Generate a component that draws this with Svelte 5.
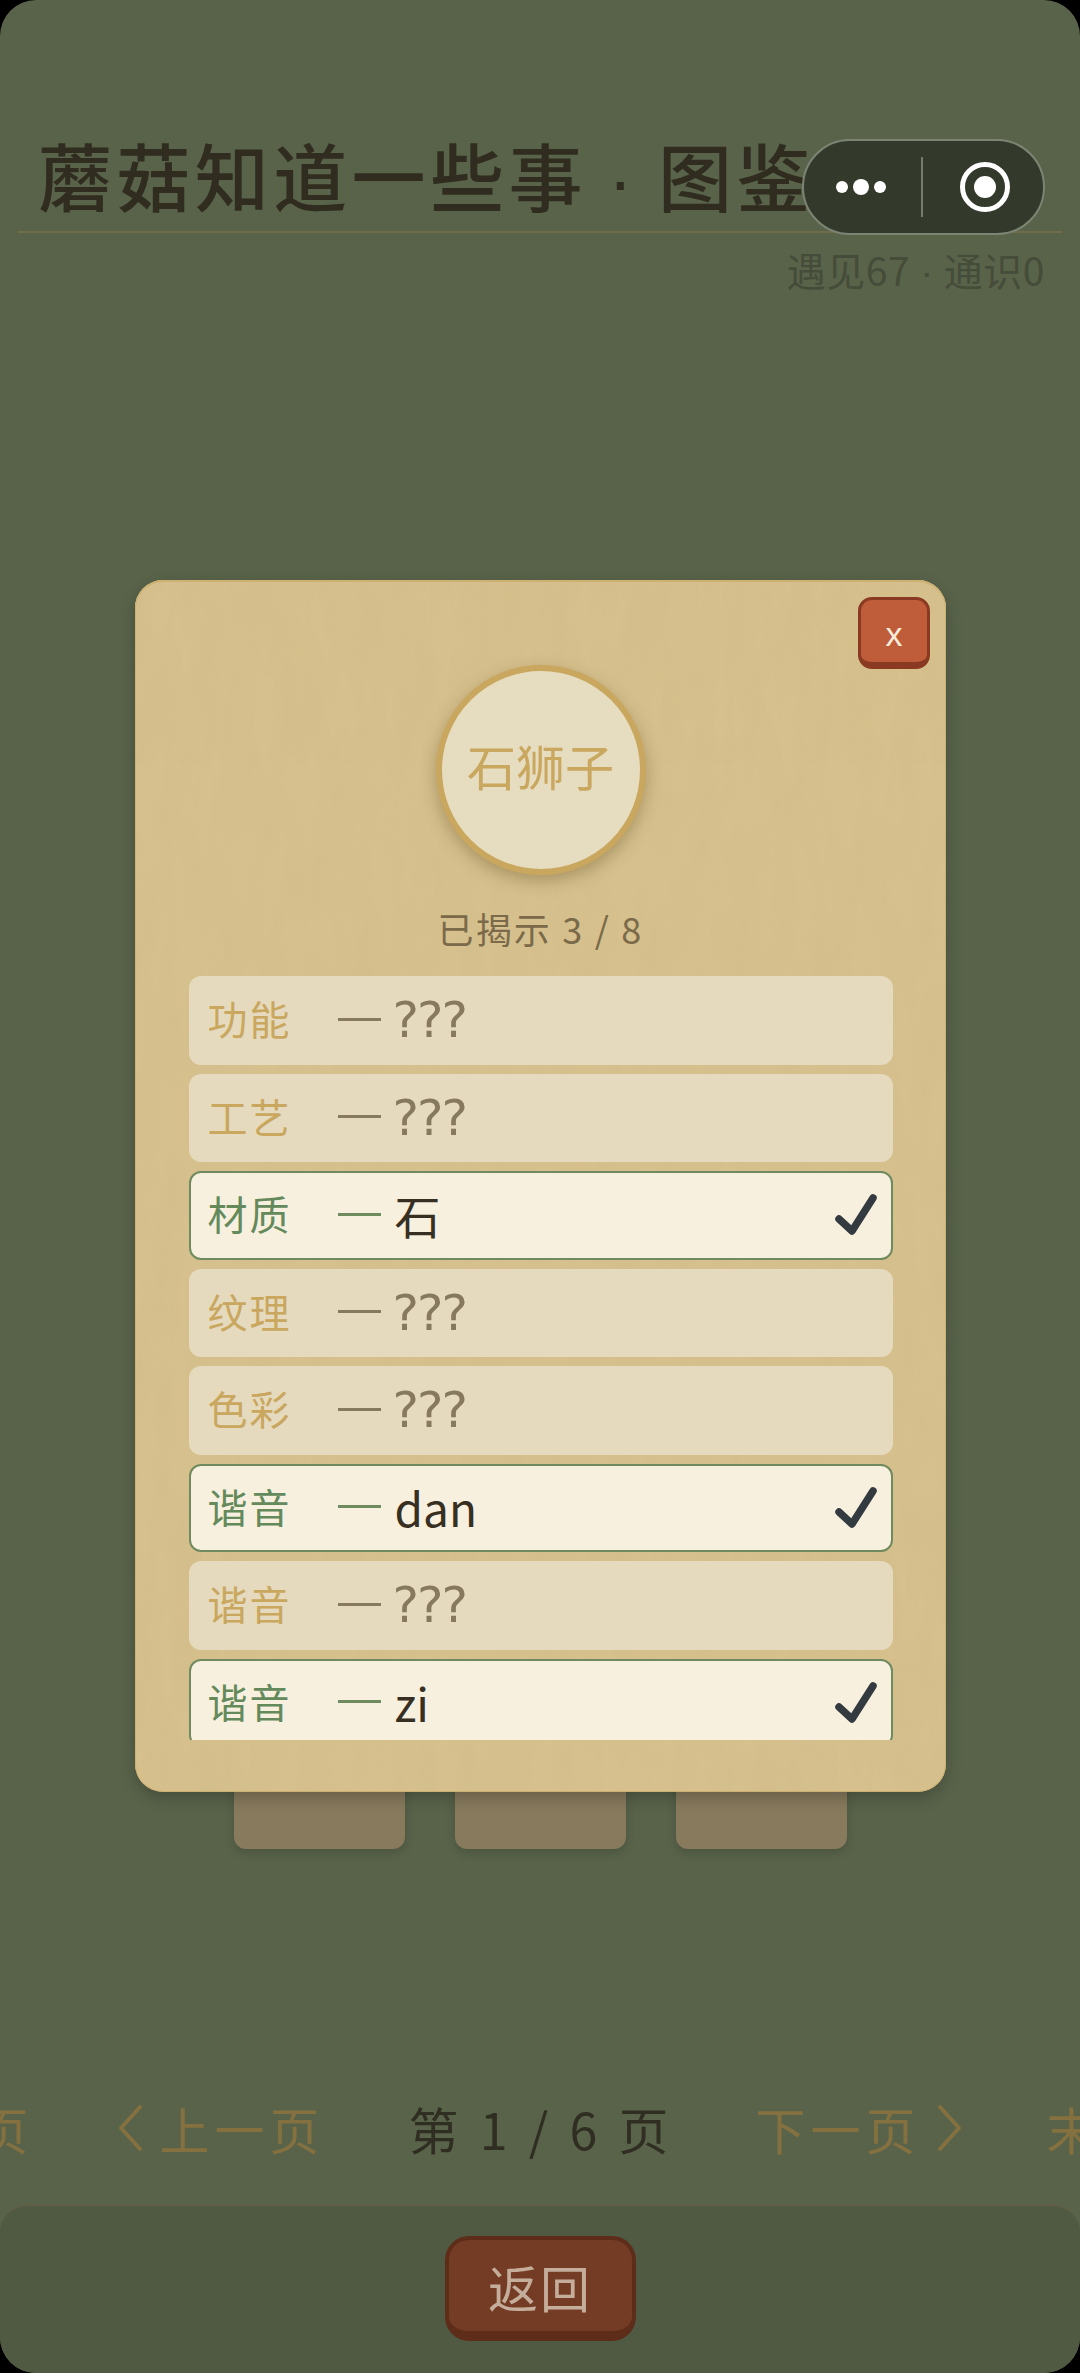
<script lang="ts">
  type Clue = { label: string; value: string; known: boolean };

  const clues: Clue[] = [
    { label: "功能", value: "???", known: false },
    { label: "工艺", value: "???", known: false },
    { label: "材质", value: "石", known: true },
    { label: "纹理", value: "???", known: false },
    { label: "色彩", value: "???", known: false },
    { label: "谐音", value: "dan", known: true },
    { label: "谐音", value: "???", known: false },
    { label: "谐音", value: "zi", known: true },
  ];
</script>

<div class="screen">
  <header class="head">
    <h1 class="title">蘑菇知道一些事<span class="mid">·</span>图鉴</h1>
    <p class="stats">遇见67<span class="mid">·</span>通识0</p>
  </header>

  <main class="shelf">
    <div class="card"></div>
    <div class="card"></div>
    <div class="card"></div>
  </main>

  <nav class="pager">
    <span class="link">首页</span>
    <span class="link arrow">
      <svg class="chev" viewBox="0 0 24 46" aria-hidden="true"><path d="M22 2 L3 23 L22 44" /></svg>
      上一页
    </span>
    <span class="current">第 1 / 6 页</span>
    <span class="link arrow">
      下一页
      <svg class="chev" viewBox="0 0 24 46" aria-hidden="true"><path d="M2 2 L21 23 L2 44" /></svg>
    </span>
    <span class="link">末页</span>
  </nav>

  <footer class="foot">
    <button type="button" class="back">返回</button>
  </footer>

  <div class="capsule">
    <div class="dots"><span></span><span class="big"></span><span></span></div>
    <div class="sep"></div>
    <div class="target"><span></span></div>
  </div>

  <section class="modal">
    <svg class="paper" aria-hidden="true">
      <filter id="grain" x="0" y="0" width="100%" height="100%">
        <feTurbulence type="fractalNoise" baseFrequency="0.05 0.012" numOctaves="5" seed="11" />
        <feColorMatrix values="0 0 0 0 0.58  0 0 0 0 0.46  0 0 0 0 0.24  0.9 0 0 0 -0.3" />
      </filter>
      <rect width="100%" height="100%" filter="url(#grain)" />
    </svg>
    <button type="button" class="close">x</button>
    <div class="medal">石狮子</div>
    <p class="progress">已揭示 3 / 8</p>
    <ul class="clues">
      {#each clues as clue}
        <li class="clue" class:known={clue.known}>
          <span class="label">{clue.label}</span>
          <span class="dash"></span>
          <span class="value" class:hidden={!clue.known}>{clue.value}</span>
          {#if clue.known}
            <svg class="check" viewBox="0 0 46 46" aria-hidden="true">
              <path d="M6 27 L19 39 L40 6" fill="none" stroke="#333a40" stroke-width="7.5" stroke-linecap="round" stroke-linejoin="round" />
            </svg>
          {/if}
        </li>
      {/each}
    </ul>
  </section>
</div>

<style>
  :global(body) {
    background: #000;
  }
  .screen {
    position: relative;
    display: flex;
    flex-direction: column;
    width: 1080px;
    height: 2373px;
    border-radius: 36px;
    overflow: hidden;
    background: #59634a;
    font-family: "Noto Sans CJK SC", "Noto Sans", sans-serif;
  }

  .head {
    padding: 128px 18px 0;
  }
  .title {
    margin: 0;
    height: 103px;
    padding: 0 20px;
    border-bottom: 2px solid #6e6d4a;
    color: #302d20;
    font-size: 74px;
    font-weight: 500;
    line-height: 92px;
    letter-spacing: 4.4px;
    white-space: nowrap;
    overflow: hidden;
  }
  .mid {
    margin: 0 0.26em;
    font-family: "Liberation Sans", sans-serif;
  }
  .title .mid {
    margin: 0 0.285em;
  }
  .stats {
    margin: 9px 0 0;
    padding-right: 17px;
    color: #454c39;
    font-size: 39px;
    line-height: 54px;
    letter-spacing: 0.5px;
    text-align: right;
  }

  .shelf {
    display: flex;
    flex: 1;
    justify-content: center;
    gap: 50px;
    padding-top: 1361px;
  }
  .card {
    width: 171px;
    height: 188px;
    border-radius: 12px;
    background: #877a5d;
    box-shadow: 0 4px 10px rgba(0, 0, 0, 0.16);
  }

  .pager {
    display: flex;
    flex: none;
    justify-content: center;
    align-items: center;
    gap: 84px;
    height: 76px;
    margin-bottom: 38px;
    white-space: nowrap;
  }
  .link {
    flex: none;
    color: #84713f;
    font-size: 50px;
    letter-spacing: 5px;
  }
  .arrow {
    display: flex;
    align-items: center;
    gap: 18px;
  }
  .chev {
    width: 24px;
    height: 46px;
  }
  .chev path {
    fill: none;
    stroke: #84713f;
    stroke-width: 4;
    stroke-linecap: round;
    stroke-linejoin: round;
  }
  .current {
    flex: none;
    color: #302e22;
    font-size: 50px;
    letter-spacing: 3px;
    word-spacing: 4px;
  }

  .foot {
    display: flex;
    flex: none;
    justify-content: center;
    height: 169px;
    padding-top: 30px;
    box-sizing: border-box;
    border-top: 2px solid #5f6045;
    border-radius: 28px 28px 0 0;
    background: #505a43;
  }
  .back {
    width: 191px;
    height: 105px;
    padding: 0;
    border: 4px solid #5e2d1a;
    border-bottom-width: 10px;
    border-radius: 24px;
    background: #753c25;
    color: #c4ad9a;
    font-family: inherit;
    font-size: 50px;
    letter-spacing: 2px;
  }

  .capsule {
    position: absolute;
    top: 139px;
    left: 802px;
    display: flex;
    align-items: center;
    box-sizing: border-box;
    width: 243px;
    height: 96px;
    border: 2px solid #7d8474;
    border-radius: 48px;
    background: #33392b;
  }
  .dots {
    display: flex;
    align-items: center;
    justify-content: center;
    gap: 5px;
    width: 113px;
    margin-right: 4px;
  }
  .dots span {
    width: 12px;
    height: 12px;
    border-radius: 50%;
    background: #fff;
  }
  .dots .big {
    width: 16px;
    height: 16px;
  }
  .sep {
    width: 2px;
    height: 60px;
    background: #777d6e;
  }
  .target {
    display: grid;
    place-items: center;
    box-sizing: border-box;
    width: 50px;
    height: 50px;
    margin-left: 37px;
    border: 5px solid #fff;
    border-radius: 50%;
  }
  .target span {
    width: 22px;
    height: 22px;
    border-radius: 50%;
    background: #fff;
  }

  .modal {
    position: absolute;
    top: 580px;
    left: 135px;
    display: flex;
    flex-direction: column;
    align-items: center;
    box-sizing: border-box;
    width: 811px;
    height: 1212px;
    padding-top: 85px;
    border-radius: 28px;
    overflow: hidden;
    background: #d6c08d;
    box-shadow: 0 6px 16px rgba(0, 0, 0, 0.22), inset 0 2px 0 #cdb172, inset 0 0 0 1px #cdb172;
  }
  .paper {
    position: absolute;
    inset: 0;
    width: 100%;
    height: 100%;
    opacity: 0.3;
  }
  .close {
    position: absolute;
    top: 17px;
    right: 16px;
    width: 72px;
    height: 72px;
    padding: 5px 0 0;
    border: 3px solid #8a3a22;
    border-bottom-width: 7px;
    border-radius: 14px;
    background: #bf5c39;
    color: #f8ecdc;
    font-family: "Liberation Sans", sans-serif;
    font-size: 34px;
    line-height: 1;
  }
  .medal {
    position: relative;
    display: grid;
    place-items: center;
    box-sizing: border-box;
    width: 210px;
    height: 210px;
    padding-bottom: 12px;
    border: 6px solid #c9a75e;
    border-radius: 50%;
    background: #e6dcbf;
    box-shadow: 0 6px 16px rgba(90, 70, 30, 0.35);
    color: #c9a75e;
    font-size: 49px;
  }
  .progress {
    position: relative;
    margin: 28px 0 0;
    color: #7a6a4a;
    font-size: 36px;
    line-height: 50px;
    letter-spacing: 2.2px;
  }
  .clues {
    position: relative;
    display: flex;
    flex-direction: column;
    gap: 9px;
    width: 704px;
    height: 764px;
    margin: 23px 0 0;
    padding: 0;
    list-style: none;
    overflow: hidden;
  }
  .clue {
    display: flex;
    flex: none;
    align-items: center;
    box-sizing: border-box;
    height: 88.5px;
    padding: 0 14px 4px 19px;
    border-radius: 12px;
    background: #e5dabd;
    font-size: 40px;
  }
  .label {
    width: 130px;
    color: #c9a75e;
    letter-spacing: 2px;
  }
  .dash {
    width: 43px;
    height: 3px;
    margin-top: 2px;
    background: #87795d;
  }
  .value {
    margin-top: 2px;
    margin-left: 14px;
    color: #362f22;
    font-size: 46px;
    line-height: 1;
  }
  .value.hidden {
    margin-top: 4px;
    margin-left: 12px;
    color: #87795d;
    font-family: "DejaVu Sans", sans-serif;
    font-size: 50px;
    letter-spacing: -2px;
  }
  .clue.known {
    padding: 0 12px 4px 17px;
    border: 2px solid #6e8a5e;
    background: #f8f0de;
  }
  .known .label {
    color: #648a5c;
  }
  .known .dash {
    background: #6e8a5e;
  }
  .check {
    width: 46px;
    height: 46px;
    margin-top: 4px;
    margin-left: auto;
  }
</style>
